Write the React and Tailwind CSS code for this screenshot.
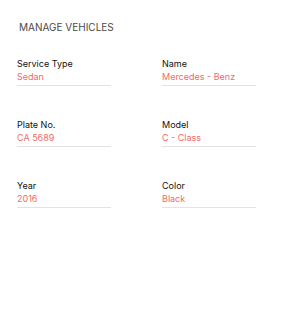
import React from 'react';

const fields = [
    { label: 'Service Type', value: 'Sedan' },
    { label: 'Name', value: 'Mercedes - Benz' },
    { label: 'Plate No.', value: 'CA 5689' },
    { label: 'Model', value: 'C - Class' },
    { label: 'Year', value: '2016' },
    { label: 'Color', value: 'Black' },
];

// 차량 정보 필드 (라벨 + 값 + 밑줄)
const Field = ({ label, value }) => (
    <div className="w-[94px]">
        <p className="text-[9px] leading-[11px] text-[#111]">{label}</p>
        <p className="mt-[2px] pb-[3px] text-[9px] leading-[11px] text-[#f26a6a] border-b border-[#e3e3e3] whitespace-nowrap">
            {value}
        </p>
    </div>
);

const App = () => {
    return (
        <div
            className="w-[300px] h-[312px] bg-white pt-[21px]"
            style={{ fontFamily: 'Inter, "Noto Sans", sans-serif' }}
        >
            <h2 className="pl-[19px] text-[10px] leading-[12px] text-[#4a4a4a]">
                MANAGE VEHICLES
            </h2>
            <div className="mt-[25px] pl-[17px] grid grid-cols-[94px_94px] gap-x-[51px] gap-y-[33px]">
                {fields.map(f => (
                    <Field key={f.label} label={f.label} value={f.value} />
                ))}
            </div>
        </div>
    );
};

export default App;
